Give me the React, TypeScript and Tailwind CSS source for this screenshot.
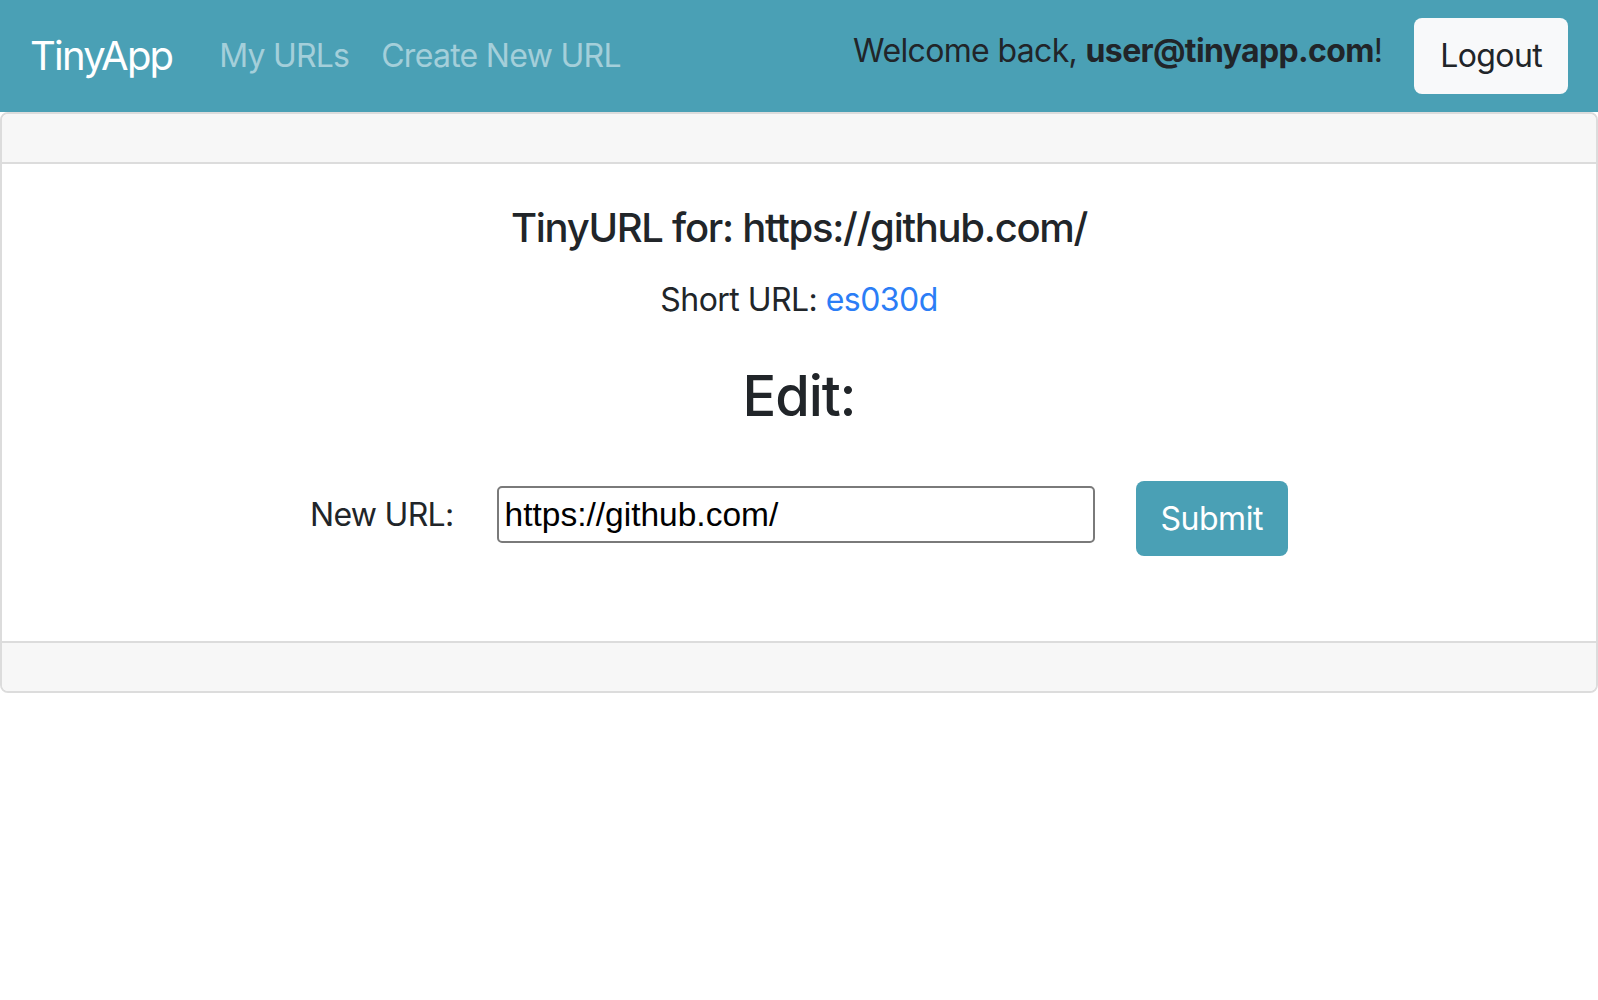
import { useState } from 'react'

export default function App() {
  const [longUrl, setLongUrl] = useState('https://github.com/')

  return (
    <div className="min-h-screen bg-white font-[Inter,sans-serif] text-[#212529]">
      {/* Navbar */}
      <nav className="h-[112px] bg-[#4aa0b5] flex items-center pl-[30px] pr-[30px]">
        <a href="#" className="text-[40px] leading-[60px] tracking-[-0.045em] text-white mr-[31px]">TinyApp</a>
        <a href="#" className="px-4 text-[32px] leading-[48px] tracking-[-0.025em] text-white/50">My URLs</a>
        <a href="#" className="px-4 text-[32px] leading-[48px] tracking-[-0.022em] text-white/50">Create New URL</a>
        <div className="ml-auto flex items-center">
          <span className="text-[32px] leading-[48px] tracking-[-0.02em] pb-[10px] mr-[32px]">
            Welcome back, <b className="font-bold">user@tinyapp.com</b>!
          </span>
          <button className="h-[76px] px-[26px] rounded-[8px] bg-[#f8f9fa] text-[32px] leading-[48px] tracking-[-0.02em] text-[#212529]">
            Logout
          </button>
        </div>
      </nav>

      {/* Card */}
      <div className="border-2 border-[#dcdcdc] rounded-[8px] overflow-hidden">
        <div className="h-[50px] bg-[#f7f7f7] border-b-2 border-[#dcdcdc]" />
        <div className="pt-[40px] pb-[85px] text-center">
          <h5 className="text-[40px] leading-[48px] tracking-[-0.032em] font-medium">TinyURL for: https://github.com/</h5>
          <p className="mt-[24px] text-[32px] leading-[48px] tracking-[-0.017em]">
            Short URL: <a href="#" className="text-[#2b7df6]">es030d</a>
          </p>
          <h3 className="mt-[39px] text-[56px] leading-[67px] tracking-[-0.02em] font-medium">Edit:</h3>
          <form className="mt-[51px] flex justify-center items-start" onSubmit={e => e.preventDefault()}>
            <label className="mt-[10px] mr-[43px] text-[32px] leading-[48px] tracking-[-0.022em]">New URL:</label>
            <input
              value={longUrl}
              onChange={e => setLongUrl(e.target.value)}
              className="mt-[5px] w-[598px] h-[57px] border-2 border-[#7a7a7a] rounded-[5px] pl-[6px] text-[33.5px] text-black font-['Liberation_Sans',Arial,sans-serif] outline-none"
            />
            <button
              type="submit"
              className="ml-[41px] h-[75px] px-[25px] rounded-[8px] bg-[#4aa0b5] text-white text-[32px] leading-[48px] tracking-[-0.015em]"
            >
              Submit
            </button>
          </form>
        </div>
        <div className="h-[50px] bg-[#f7f7f7] border-t-2 border-[#dcdcdc]" />
      </div>
    </div>
  )
}
